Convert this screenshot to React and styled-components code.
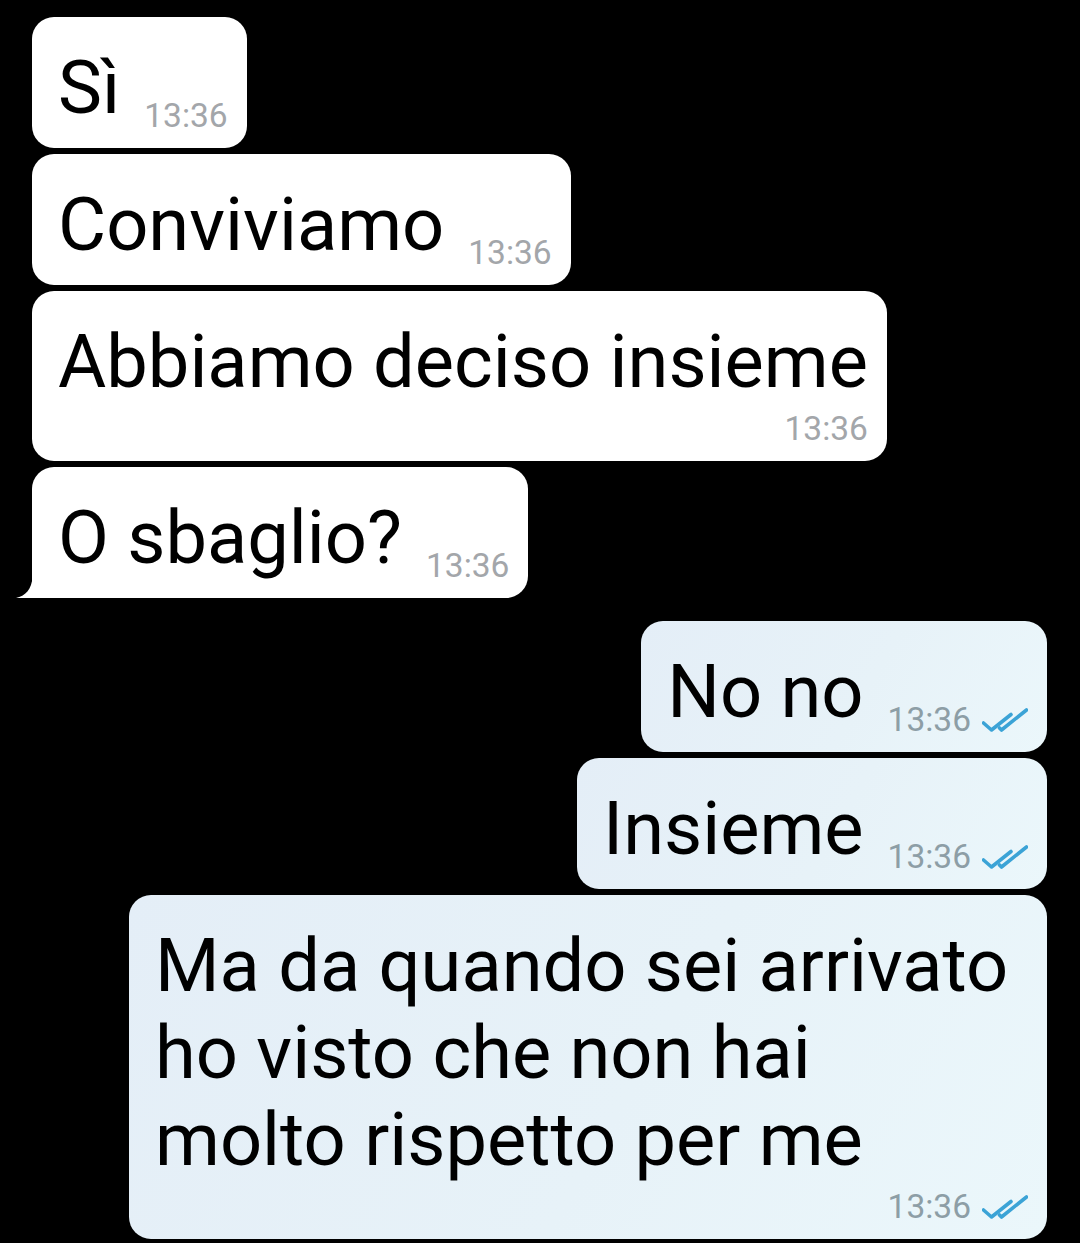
import React from "react";
import styled, { createGlobalStyle } from "styled-components";

const GlobalStyle = createGlobalStyle`
  html, body {
    margin: 0;
    padding: 0;
    background: #000;
  }
  body {
    font-family: Roboto, "Noto Sans", sans-serif;
  }
`;

const Chat = styled.div`
  width: 1080px;
  min-height: 1243px;
  box-sizing: border-box;
  background: #000;
  padding: 17px 33px 0 32px;
  display: flex;
  flex-direction: column;
  gap: 6px;
`;

const Bubble = styled.div`
  position: relative;
  align-self: ${(p) => (p.$out ? "flex-end" : "flex-start")};
  box-sizing: border-box;
  width: ${(p) => (p.$wide ? "918px" : "auto")};
  margin-top: ${(p) => (p.$gapBefore ? "17px" : "0")};
  padding: 27px 19px 13px 26px;
  border-radius: 22px;
  border-bottom-left-radius: ${(p) => (p.$tail ? "0" : "22px")};
  background: ${(p) =>
    p.$out
      ? "linear-gradient(120deg, #e4eef7 0%, #e7f2f8 55%, #ebf7fb 100%)"
      : "#ffffff"};
  display: flex;
  flex-direction: ${(p) => (p.$stacked ? "column" : "row")};
  align-items: flex-end;
  gap: ${(p) => (p.$stacked ? "5px" : "24px")};
`;

const Text = styled.div`
  align-self: ${(p) => (p.$stacked ? "flex-start" : "auto")};
  max-width: 857px;
  font-size: 74px;
  line-height: 87px;
  color: #000;
  margin-bottom: ${(p) => (p.$stacked ? "0" : "4px")};
`;

const Meta = styled.div`
  display: flex;
  align-items: center;
  gap: 11px;
  font-size: 33.5px;
  line-height: 38px;
  white-space: nowrap;
  color: ${(p) => (p.$out ? "#8d9ea6" : "#a3a6aa")};
`;

const Tail = styled.svg`
  position: absolute;
  left: -16px;
  bottom: 0;
  width: 17px;
  height: 30px;
`;

function Ticks() {
  return (
    <svg width="46" height="24" viewBox="0 0 46 24" fill="none">
      <path
        d="M1.5 15 L9.5 22 L29 6.5"
        stroke="#3ba3d6"
        strokeWidth="3.6"
        strokeLinecap="round"
        strokeLinejoin="round"
      />
      <path
        d="M17.5 20 L19.5 22 L44.5 2"
        stroke="#3ba3d6"
        strokeWidth="3.6"
        strokeLinecap="round"
        strokeLinejoin="round"
      />
    </svg>
  );
}

function Message({ out, stacked, wide, tail, gapBefore, children }) {
  return (
    <Bubble
      $out={out}
      $stacked={stacked}
      $wide={wide}
      $tail={tail}
      $gapBefore={gapBefore}
    >
      {tail && (
        <Tail viewBox="0 0 17 30">
          <path d="M17 0 L17 30 L0 30 C9 28 16 22 16.5 8 Z" fill="#fff" />
        </Tail>
      )}
      <Text $stacked={stacked}>{children}</Text>
      <Meta $out={out}>
        <span>13:36</span>
        {out && <Ticks />}
      </Meta>
    </Bubble>
  );
}

export default function App() {
  return (
    <>
      <GlobalStyle />
      <Chat>
        <Message>Sì</Message>
        <Message>Conviviamo</Message>
        <Message stacked>Abbiamo deciso insieme</Message>
        <Message tail>O sbaglio?</Message>
        <Message out gapBefore>No no</Message>
        <Message out>Insieme</Message>
        <Message out stacked wide>
          Ma da quando sei arrivato ho visto che non hai molto rispetto per me
        </Message>
      </Chat>
    </>
  );
}
